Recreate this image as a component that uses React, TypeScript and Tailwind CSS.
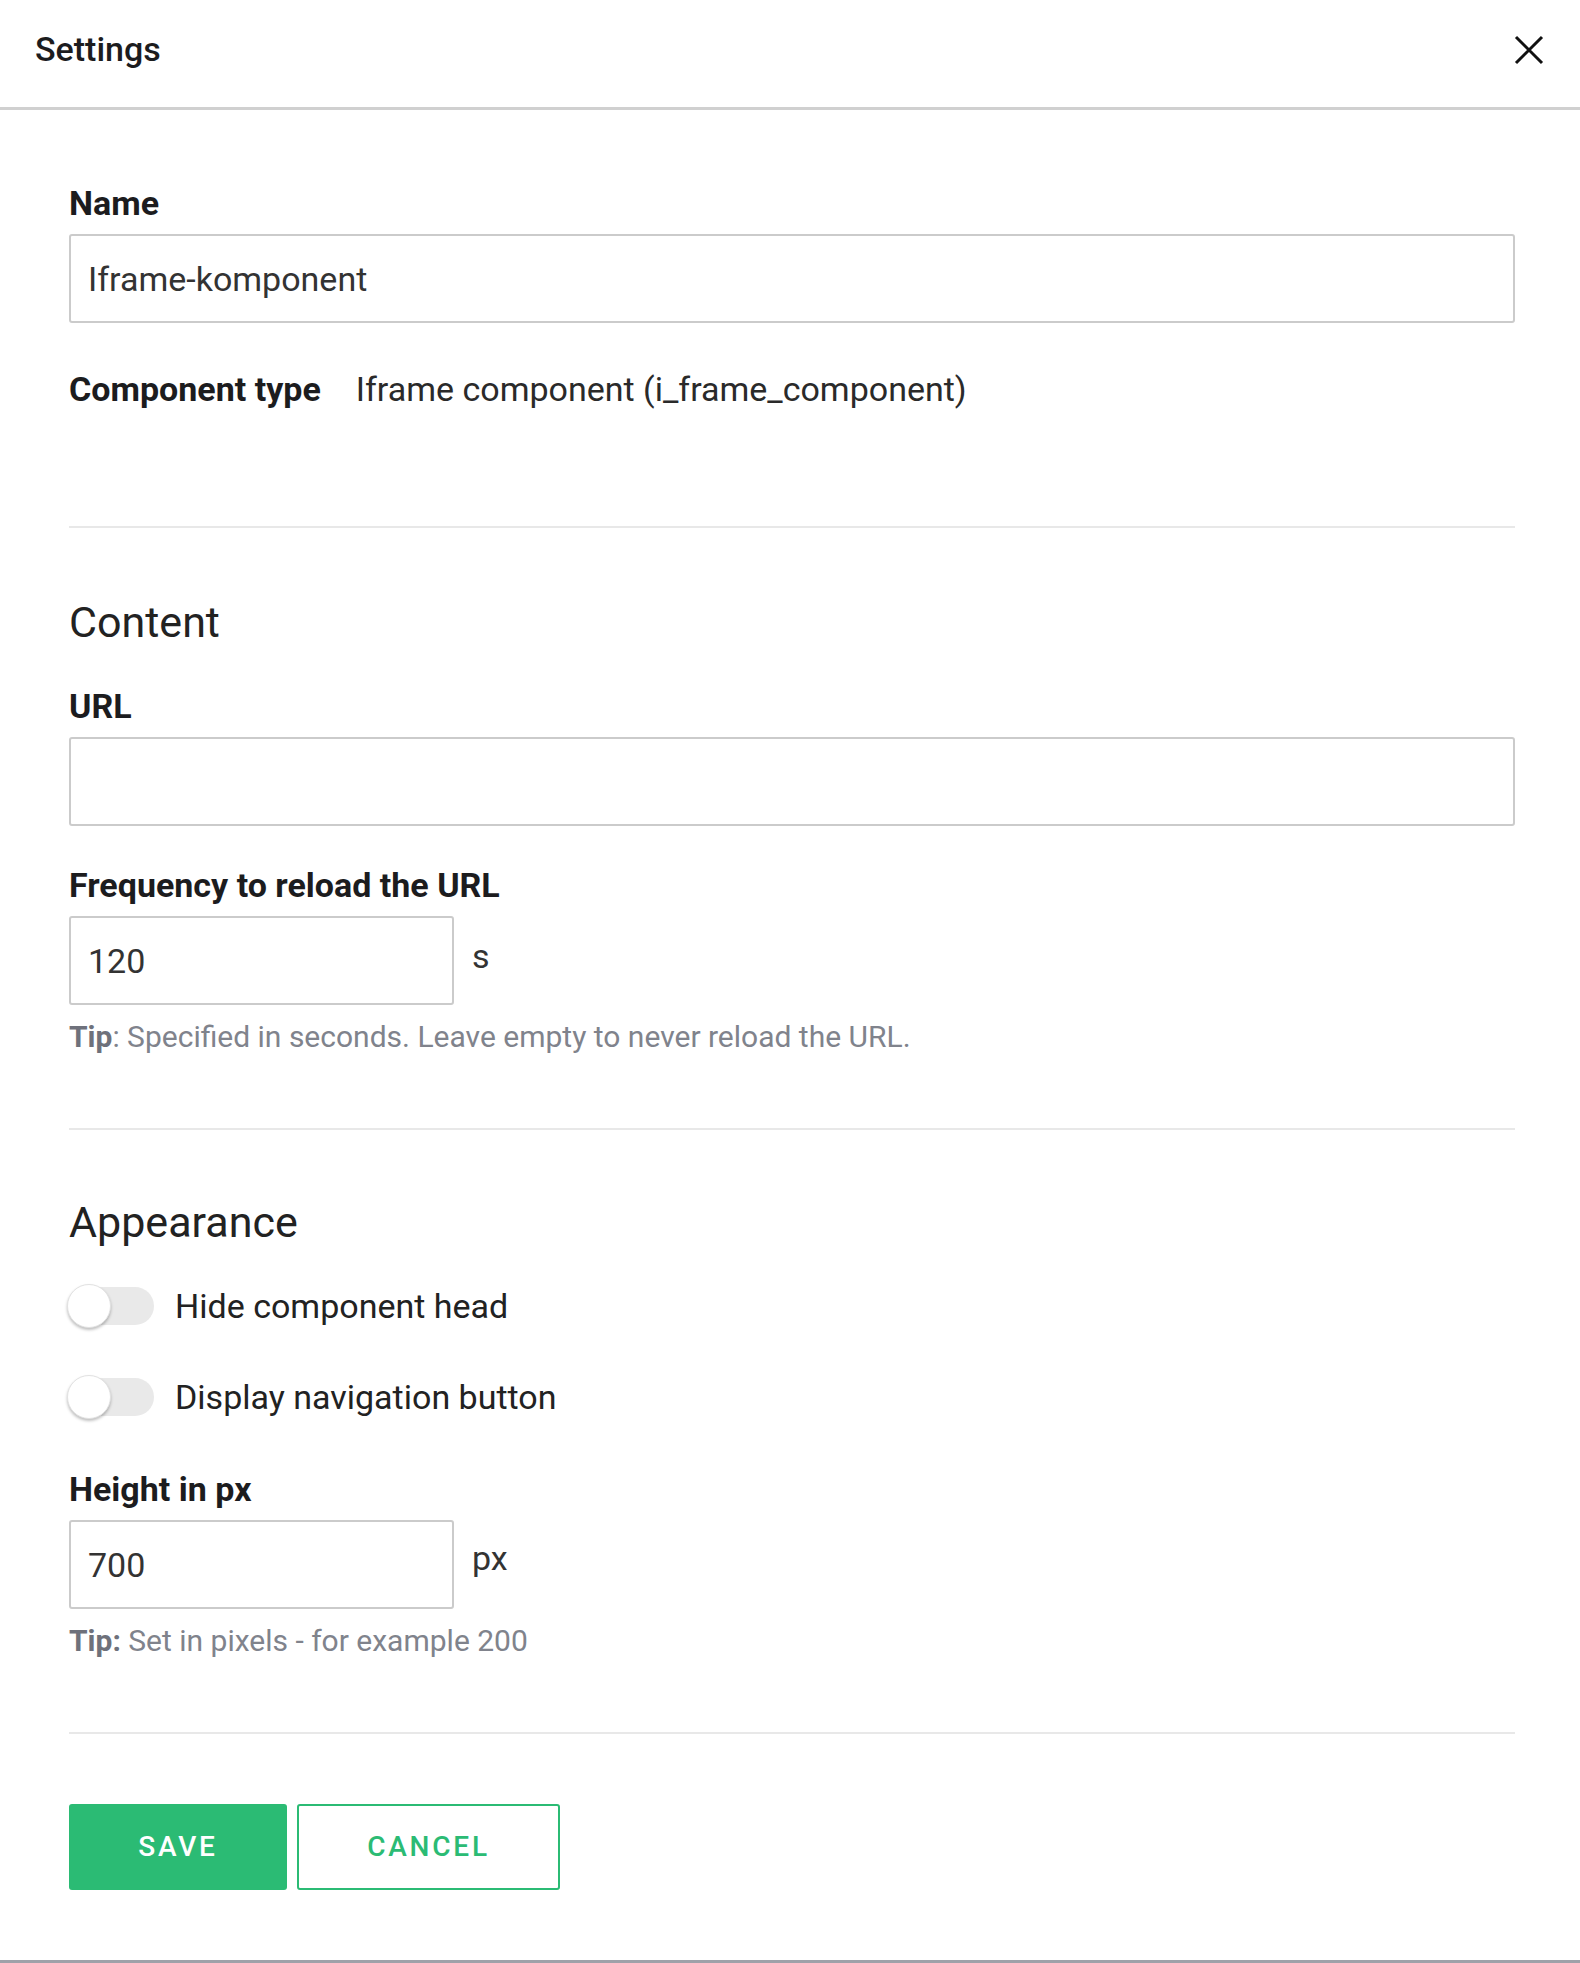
import React from "react";

function Label({ children }: { children: React.ReactNode }) {
  return <div className="text-[34px] leading-[40px] font-bold text-[#1c1c1e]">{children}</div>;
}

function TextField({ value, narrow }: { value?: string; narrow?: boolean }) {
  return (
    <input
      defaultValue={value}
      className={`${narrow ? "w-[385px]" : "w-full"} h-[89px] rounded-[3px] border-2 border-[#cbcbcb] bg-white px-[17px] text-[34px] text-[#333] outline-none`}
    />
  );
}

function Tip({ head, children }: { head: string; children: React.ReactNode }) {
  return (
    <div className="mt-[14px] text-[30px] leading-[36px] text-[#80838c]">
      <span className="font-bold text-[#6e717b]">{head}</span>
      {children}
    </div>
  );
}

function Toggle({ label }: { label: string }) {
  return (
    <div className="flex h-[40px] items-center gap-[21px]">
      <div className="relative h-[38px] w-[85px] rounded-full bg-[#e9e9e9]">
        <div className="absolute -left-[2px] top-1/2 h-[44px] w-[44px] -translate-y-1/2 rounded-full border border-[#e2e2e2] bg-white shadow-[0_2px_3px_rgba(0,0,0,0.25)]" />
      </div>
      <span className="text-[34px] leading-[40px] text-[#222]">{label}</span>
    </div>
  );
}

function Divider() {
  return <div className="h-[2px] bg-[#e8e8e8]" />;
}

export default function App() {
  return (
    <div className="h-[1963px] w-full border-b-[3px] border-[#9fa1a9] bg-white font-[Roboto,sans-serif] text-[#1c1c1e]">
      <header className="flex h-[110px] items-center justify-between border-b-[3px] border-[#d0d0d0] pb-[8px] pl-[35px] pr-[35px]">
        <h1 className="text-[34px] font-medium text-[#1c1c1e]">Settings</h1>
        <button className="flex h-[32px] w-[32px] items-center justify-center">
          <svg width="30" height="30" viewBox="0 0 30 30" fill="none" stroke="#111" strokeWidth="3">
            <path d="M2 2L28 28M28 2L2 28" />
          </svg>
        </button>
      </header>

      <div className="pl-[69px] pr-[65px] pt-[73px]">
        <Label>Name</Label>
        <div className="mt-[11px]">
          <TextField value="Iframe-komponent" />
        </div>

        <div className="mt-[46px] flex h-[40px] items-center gap-[35px] text-[34px]">
          <span className="font-bold">Component type</span>
          <span className="text-[#2a2a2a]">Iframe component (i_frame_component)</span>
        </div>

        <div className="mt-[117px]">
          <Divider />
        </div>

        <h2 className="mt-[68px] text-[43px] leading-[52px] text-[#222]">Content</h2>

        <div className="mt-[38px]">
          <Label>URL</Label>
        </div>
        <div className="mt-[11px]">
          <TextField />
        </div>

        <div className="mt-[39px]">
          <Label>Frequency to reload the URL</Label>
        </div>
        <div className="mt-[11px] flex items-start gap-[18px]">
          <TextField value="120" narrow />
          <span className="mt-[20px] text-[34px] leading-[40px] text-[#333]">s</span>
        </div>
        <Tip head="Tip">: Specified in seconds. Leave empty to never reload the URL.</Tip>

        <div className="mt-[73px]">
          <Divider />
        </div>

        <h2 className="mt-[66px] text-[43px] leading-[52px] text-[#222]">Appearance</h2>

        <div className="mt-[38px] flex flex-col gap-[51px]">
          <Toggle label="Hide component head" />
          <Toggle label="Display navigation button" />
        </div>

        <div className="mt-[52px]">
          <Label>Height in px</Label>
        </div>
        <div className="mt-[11px] flex items-start gap-[18px]">
          <TextField value="700" narrow />
          <span className="mt-[18px] text-[34px] leading-[40px] text-[#333]">px</span>
        </div>
        <Tip head="Tip:"> Set in pixels - for example 200</Tip>

        <div className="mt-[73px]">
          <Divider />
        </div>

        <div className="mt-[70px] flex gap-[10px]">
          <button className="h-[86px] w-[218px] rounded-[3px] bg-[#2bbb74] text-[28px] font-medium tracking-[0.1em] text-white">
            SAVE
          </button>
          <button className="h-[86px] w-[263px] rounded-[3px] border-2 border-[#2bbb74] bg-white text-[28px] font-medium tracking-[0.1em] text-[#2bbb74]">
            CANCEL
          </button>
        </div>
      </div>
    </div>
  );
}
